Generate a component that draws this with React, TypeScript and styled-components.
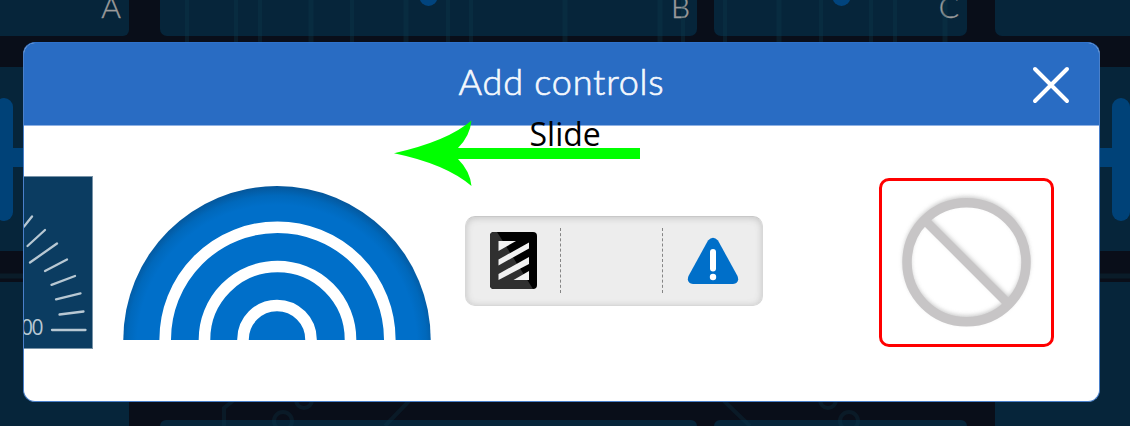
import React from "react";
import styled, { createGlobalStyle } from "styled-components";

const GlobalStyle = createGlobalStyle`
  *, *::before, *::after { box-sizing: border-box; }
  body { margin: 0; background: #090e19; overflow: hidden; }
`;

const Screen = styled.main`
  position: relative;
  width: 1130px;
  height: 426px;
  overflow: hidden;
  background: #090e19;
  font-family: Lato, sans-serif;
`;

const Workspace = styled.div`
  display: grid;
  grid-template-columns: 129px 31px 537px 17px 253px 28px 135px;
  grid-template-rows: 36px 31px 184px 31px 138px 6px;
  height: 426px;
`;

const Panel = styled.section<{
  $col: number;
  $row: string;
  $radius: string;
  $align?: string;
}>`
  display: flex;
  align-items: center;
  justify-content: ${(p) => p.$align ?? "flex-end"};
  grid-column: ${(p) => p.$col};
  grid-row: ${(p) => p.$row};
  border-radius: ${(p) => p.$radius};
  background: #06253a;
`;

const PanelLabel = styled.span<{ $inset: number }>`
  margin: -25px ${(p) => p.$inset}px 0 0;
  color: #9b9b9b;
  font-size: 30px;
  font-weight: 300;
  line-height: 36px;
  -webkit-text-stroke: 0.4px #9b9b9b;
`;

const Handle = styled.div<{ $side: "left" | "right" }>`
  display: flex;
  flex-direction: ${(p) => (p.$side === "left" ? "row" : "row-reverse")};
  align-items: center;
  width: 60px;
  margin-${(p) => p.$side}: ${(p) => (p.$side === "left" ? "-5px" : "0")};

  &::before {
    content: "";
    width: 18px;
    height: 123px;
    border-radius: 9px;
    background: #004278;
  }

  &::after {
    content: "";
    flex: 1;
    height: 19px;
    margin-top: -3px;
    background: #004278;
  }
`;

const Circuit = styled.svg`
  position: absolute;
  inset: 0;
  pointer-events: none;
`;

const Dialog = styled.section`
  position: absolute;
  left: 23px;
  top: 42px;
  display: flex;
  flex-direction: column;
  width: 1077px;
  height: 360px;
  border: 1px solid #4a80ca;
  border-top-color: #2f72cb;
  border-radius: 12px;
  overflow: hidden;
  background: #fff;
`;

const Header = styled.header`
  display: grid;
  grid-template-columns: 1fr auto 1fr;
  align-items: center;
  flex: none;
  height: 83px;
  border-bottom: 1px solid #8fb1e3;
  background: #296cc3;
`;

const Title = styled.h1`
  grid-column: 2;
  margin: 0 0 7px;
  color: #f4f8fd;
  font-size: 36px;
  font-weight: 300;
  line-height: 44px;
  letter-spacing: 0.8px;
  white-space: nowrap;
  -webkit-text-stroke: 0.7px #f4f8fd;
`;

const CloseButton = styled.button`
  justify-self: end;
  display: flex;
  margin: 1px 28.5px 0 0;
  padding: 0;
  border: 0;
  background: none;
`;

const Controls = styled.div`
  display: flex;
  align-items: center;
  flex: 1;
  padding-bottom: 2px;
`;

const Gauge = styled.div`
  display: flex;
  width: 69px;
  height: 173px;
  border: 1px solid #7893a8;
  border-left: 0;
  background: #0b3c61;
  overflow: hidden;
`;

const Arch = styled.div`
  display: flex;
  margin-left: 30px;
`;

const SwitchBar = styled.div`
  display: grid;
  grid-template-columns: 95px 102px 1fr;
  align-items: center;
  justify-items: center;
  width: 298px;
  height: 90px;
  margin: 0 0 4px 34.4px;
  border: 1px solid #d8d8d8;
  border-top-color: #c8c8c8;
  border-radius: 10px;
  background: #ededed;
  box-shadow: inset 0 1px 7px #c4c4c4;
`;

const Slot = styled.div<{ $divided?: boolean }>`
  display: flex;
  align-items: center;
  justify-content: center;
  width: 100%;
  height: 65px;
  border-right: ${(p) => (p.$divided ? "1px dashed #858585" : "0")};
`;

const Selected = styled.div`
  display: flex;
  align-items: center;
  justify-content: center;
  width: 175px;
  height: 169px;
  margin: 0 0 1px 115.6px;
  border: 3px solid #f00;
  border-radius: 10px;
`;

const Annotation = styled.div`
  position: absolute;
  left: 390px;
  top: 108px;
  width: 260px;
  height: 84px;
`;

const Arrow = styled.svg`
  display: block;
`;

const Caption = styled.span`
  position: absolute;
  left: 139.5px;
  top: 4px;
  color: #000;
  font-family: "Open Sans", sans-serif;
  font-size: 32px;
  line-height: 44px;
`;

const ticks = [
  "M0 49.5L8 39.5",
  "M3.5 69L21 53",
  "M6 85.5L33 66.5",
  "M21 94L43 82.5",
  "M27.5 107.8L51 99",
  "M32 122.3L56.5 116.3",
  "M35.5 137.5L59.5 134.5",
  "M28 153H61.5",
];

const traces: [number, number][] = [
  [187, 4], [236, 4], [260, 4], [311, 5], [352, 4], [406, 5], [448, 4],
  [471, 4], [565, 5], [660, 5], [683, 4], [725, 4], [779, 5], [821, 4],
  [871, 4], [895, 4], [945, 5],
];

function CircuitTraces() {
  return (
    <Circuit width="1130" height="426" fill="none" stroke="#0f4053" opacity=".7">
      {traces.map(([x, w]) => (
        <path key={x} d={`M${x} 0V43`} strokeWidth={w} opacity=".4" />
      ))}
      <g strokeWidth="4" opacity=".35">
        <path d="M224 426V408L234 400M409 401L385 426M724 401L750 426" />
        <circle cx="283" cy="421" r="9" />
        <circle cx="304" cy="400" r="8" />
        <circle cx="849" cy="421" r="9" />
        <circle cx="828" cy="400" r="8" />
      </g>
      <path d="M0 276H23M1100 276H1130" strokeWidth="5" opacity=".4" />
      <g fill="#00529a" stroke="none">
        <circle cx="428.5" cy="-3" r="9" />
        <circle cx="841.5" cy="-3" r="9" />
      </g>
    </Circuit>
  );
}

function HatchIcon() {
  return (
    <svg width="47" height="57" viewBox="0 0 47 57">
      <rect width="47" height="57" rx="4" fill="#000" />
      <path d="M4 0H7L43 57H4Q0 57 0 53V4Q0 0 4 0Z" fill="#303030" />
      <path
        d="M8.5 9H26L8.5 19ZM39 10.5V16.5L8.5 33.5V27.5ZM39 25V32L8.5 48V42ZM39 39V48H23.5Z"
        fill="#f1f1f1"
      />
    </svg>
  );
}

function WarningIcon() {
  return (
    <svg width="52" height="48" viewBox="0 0 52 48">
      <path
        d="M21 3.5Q26 -2 31 3.5L50.5 39Q53 46 46 47H6Q-1 46 1.5 39Z"
        fill="#006fc9"
      />
      <path d="M26 15V31.5" stroke="#fff" strokeWidth="6" strokeLinecap="round" />
      <circle cx="26" cy="40" r="3.2" fill="#fff" />
    </svg>
  );
}

function ArchDrawing() {
  return (
    <svg width="308" height="154" viewBox="0 0 308 154">
      <defs>
        <radialGradient id="archShade" gradientUnits="userSpaceOnUse" cx="154" cy="159" r="159">
          <stop offset=".88" stopColor="#006fc9" />
          <stop offset=".94" stopColor="#0068bb" />
          <stop offset="1" stopColor="#05569a" />
        </radialGradient>
      </defs>
      <circle cx="154" cy="153.7" r="153.7" fill="url(#archShade)" />
      <g fill="none" stroke="#fff" strokeWidth="11.6">
        <circle cx="154.5" cy="153.5" r="112.3" />
        <circle cx="154.5" cy="153.5" r="73" />
        <circle cx="154" cy="153.5" r="34" />
      </g>
    </svg>
  );
}

function NoneIcon() {
  return (
    <svg width="140" height="140" viewBox="0 0 140 140" fill="none">
      <defs>
        <filter id="softShadow" x="-10%" y="-10%" width="120%" height="120%">
          <feGaussianBlur stdDeviation="2.2" />
        </filter>
      </defs>
      <g transform="translate(0 -2)" stroke="#bdbdbd" strokeWidth="8" opacity=".8" filter="url(#softShadow)">
        <circle cx="70.5" cy="70" r="59.5" />
        <path d="M30 29L112 111" />
      </g>
      <circle cx="70.5" cy="70.3" r="59.5" stroke="#c7c5c6" strokeWidth="9.5" />
      <path d="M29.5 29L112 111.5" stroke="#c7c5c6" strokeWidth="9" />
    </svg>
  );
}

export default function App() {
  return (
    <Screen>
      <GlobalStyle />
      <Workspace>
        <Panel $col={1} $row="1" $radius="0 0 6px 0">
          <PanelLabel $inset={8}>A</PanelLabel>
        </Panel>
        <Panel $col={3} $row="1" $radius="0 0 7px 7px">
          <PanelLabel $inset={7}>B</PanelLabel>
        </Panel>
        <Panel $col={5} $row="1" $radius="0 0 7px 7px">
          <PanelLabel $inset={8}>C</PanelLabel>
        </Panel>
        <Panel $col={7} $row="1" $radius="0 0 0 7px" />
        <Panel $col={1} $row="3" $radius="0" $align="flex-start">
          <Handle $side="left" />
        </Panel>
        <Panel $col={7} $row="3" $radius="0">
          <Handle $side="right" />
        </Panel>
        <Panel $col={1} $row="5 / 7" $radius="0" />
        <Panel $col={3} $row="6" $radius="7px 7px 0 0" />
        <Panel $col={5} $row="6" $radius="7px 7px 0 0" />
        <Panel $col={7} $row="5 / 7" $radius="0" />
      </Workspace>
      <CircuitTraces />

      <Dialog>
        <Header>
          <Title>Add controls</Title>
          <CloseButton aria-label="Close">
            <svg width="40" height="40" viewBox="0 0 40 40">
              <path
                d="M4 4L36 36M36 4L4 36"
                stroke="#fff"
                strokeWidth="4"
                strokeLinecap="round"
              />
            </svg>
          </CloseButton>
        </Header>
        <Controls>
          <Gauge>
            <svg width="68" height="171" viewBox="0 0 68 171">
              <g fill="none" stroke="#b8c8d3" strokeWidth="2.3" strokeLinecap="round">
                {ticks.map((d) => (
                  <path key={d} d={d} />
                ))}
              </g>
              <text
                x="19.5"
                y="157.5"
                textAnchor="end"
                fill="#b8c8d3"
                fontFamily="Open Sans, sans-serif"
                fontSize="21"
                fontWeight="500"
                textLength="22.5"
              >
                00
              </text>
            </svg>
          </Gauge>
          <Arch>
            <ArchDrawing />
          </Arch>
          <SwitchBar>
            <Slot $divided>
              <HatchIcon />
            </Slot>
            <Slot $divided />
            <Slot>
              <WarningIcon />
            </Slot>
          </SwitchBar>
          <Selected>
            <NoneIcon />
          </Selected>
        </Controls>
      </Dialog>

      <Annotation>
        <Arrow width="260" height="84" viewBox="0 0 260 84">
          <path
            d="M4 45.2Q58 33 81.5 12.5Q80 28 68 40H250V51H68Q80 63 81.5 78Q56 56 4 45.2Z"
            fill="#0f0"
          />
        </Arrow>
        <Caption>Slide</Caption>
      </Annotation>
    </Screen>
  );
}
